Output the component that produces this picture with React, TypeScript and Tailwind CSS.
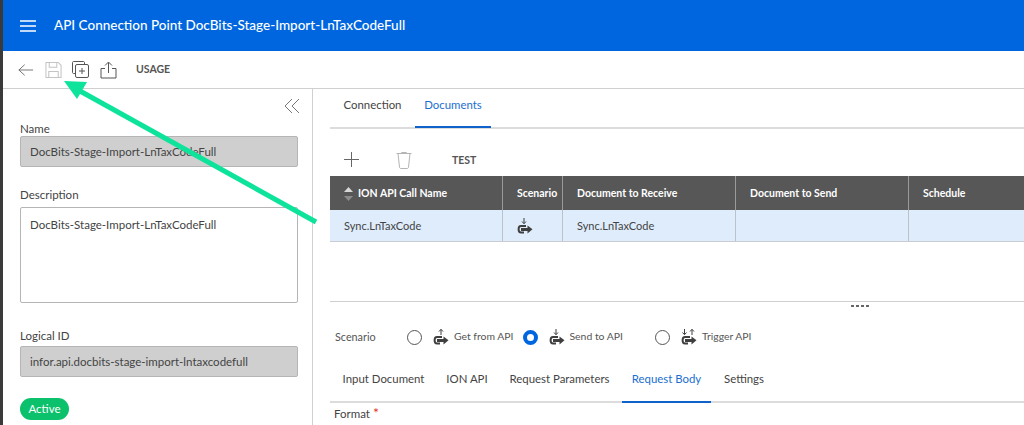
const FONT = "font-['Lato','Open_Sans',sans-serif]";

// u-turn arrow shared by the scenario icons, small arrows on top differ
const ScenarioIcon = ({ variant }: { variant: "get" | "send" | "trigger" }) => (
    <svg className="block" width="16" height="18" viewBox="0 0 16 18" fill="none" stroke="#3f3f3f">
        {variant === "get" && <path d="M8 7V1.5M6 3.5L8 1.3L10 3.5" strokeWidth="1" />}
        {variant === "send" && <path d="M7 1V6.5M5 4.5L7 6.7L9 4.5" strokeWidth="1" />}
        {variant === "trigger" && (
            <path d="M3.5 1V6.5M1.5 4.5L3.5 6.7L5.5 4.5M11 7V1.5M9 3.5L11 1.3L13 3.5" strokeWidth="1" />
        )}
        <path d="M9 9H4C.8 9 .8 15.5 4 15.5H7" strokeWidth="2" />
        <path d="M4 11H10.5V8.5L15.5 12.3L10.5 16.5V14H4Z" fill="#3f3f3f" stroke="none" />
    </svg>
);

const Radio = ({ checked }: { checked?: boolean }) =>
    checked ? (
        <span className="block w-[15px] h-[15px] rounded-full border-[4px] border-[#0066e0] bg-white" />
    ) : (
        <span className="block w-[15px] h-[15px] rounded-full border border-[#555] bg-white" />
    );

const Field = ({ label, value, className, labelClass }: { label: string; value: string; className?: string; labelClass?: string }) => (
    <div className={className}>
        <div className={`text-[11.5px] leading-[14px] text-[#444] ${labelClass}`}>{label}</div>
        <div className="h-[31px] pl-[9px] flex items-center bg-[#cfcfcf] border border-[#b5b5b5] rounded-[2px] text-[11.5px] text-[#444]">
            {value}
        </div>
    </div>
);

const Tab = ({ label, active, className }: { label: string; active?: boolean; className?: string }) => (
    <div
        className={`h-full flex items-center justify-center text-[11.4px] border-b-2 ${
            active ? "border-[#0f62c9] text-[#1a6fd0]" : "border-transparent text-[#444]"
        } ${className}`}
    >
        {label}
    </div>
);

const columns = [
    { label: "ION API Call Name", width: "w-[173px]", cell: "Sync.LnTaxCode" },
    { label: "Scenario", width: "w-[60px]", cell: "" },
    { label: "Document to Receive", width: "w-[173px]", cell: "Sync.LnTaxCode" },
    { label: "Document to Send", width: "w-[173px]", cell: "" },
    { label: "Schedule", width: "flex-1", cell: "" },
];

const App = () => {
    return (
        <div className={`relative flex w-[1024px] h-[425px] overflow-hidden bg-white ${FONT}`}>
            <div className="w-[3px] bg-[#3a3a3a] shrink-0" />

            <div className="flex-1 flex flex-col min-w-0">
                {/* Title bar */}
                <div className="h-[51px] shrink-0 bg-[#0066e0] flex items-center text-white">
                    <svg className="ml-[17px]" width="16" height="12" viewBox="0 0 16 12" stroke="#fff" strokeWidth="1.3">
                        <path d="M0 1H16M0 6H16M0 11H16" />
                    </svg>
                    <div className="ml-[18px] mb-[1px] text-[13.5px] font-medium whitespace-nowrap">
                        API Connection Point DocBits-Stage-Import-LnTaxCodeFull
                    </div>
                </div>

                {/* Toolbar */}
                <div className="h-[38px] shrink-0 border-b border-[#d0d0d0] flex items-center text-[#555]">
                    <svg className="ml-[15px]" width="16" height="14" viewBox="0 0 18 14" fill="none" stroke="#666" strokeWidth="1">
                        <path d="M17 7H1M7.5 1L1 7L7.5 13" />
                    </svg>
                    <svg className="ml-[11px]" width="17" height="18" viewBox="0 0 18 18" fill="none" stroke="#c4c4c4" strokeWidth="1.1">
                        <path d="M1 1H14L17 4V17H1ZM4.5 1V6H12.5V1M4 17V10.5H14V17" />
                    </svg>
                    <svg className="ml-[10px]" width="17" height="17" viewBox="0 0 17 17" fill="none" stroke="#555" strokeWidth="1">
                        <path d="M3 12.5H1.5C1 12.5 .5 12 .5 11.5V1.5C.5 1 1 .5 1.5 .5H11.5C12 .5 12.5 1 12.5 1.5V3" />
                        <rect x="3.5" y="3.5" width="13" height="13" rx="1.5" />
                        <path d="M10 7V13M7 10H13" />
                    </svg>
                    <svg className="ml-[11px]" width="17" height="18" viewBox="0 0 17 18" fill="none" stroke="#555" strokeWidth="1">
                        <path d="M8.5 12V1.5M5 4.5L8.5 1L12 4.5M5 7.5H1V17H16V7.5H12" />
                    </svg>
                    <div className="ml-[19px] mt-[1px] text-[10.5px] font-bold text-[#555]">USAGE</div>
                </div>

                <div className="flex-1 flex min-h-0">
                    {/* Left panel */}
                    <div className="w-[310px] shrink-0 border-r border-[#d0d0d0] pl-[17px] pr-[14px]">
                        <div className="h-[33px] flex items-center justify-end">
                            <svg className="mr-[-2px] mt-[1px]" width="16" height="16" viewBox="0 0 16 16" fill="none" stroke="#777" strokeWidth="1">
                                <path d="M8 1L1 8L8 15M15 1L8 8L15 15" />
                            </svg>
                        </div>
                        <Field label="Name" value="DocBits-Stage-Import-LnTaxCodeFull" />
                        <div className="mt-[21px] text-[11.5px] leading-[14px] text-[#444]">Description</div>
                        <div className="mt-[5px] h-[96px] border border-[#b5b5b5] rounded-[2px] pl-[9px] pt-[9px] text-[11.5px] leading-[16px] text-[#444]">
                            DocBits-Stage-Import-LnTaxCodeFull
                        </div>
                        <Field className="mt-[26px]" labelClass="mb-[3px]" label="Logical ID" value="infor.api.docbits-stage-import-lntaxcodefull" />
                        <div className="mt-[21px] w-[49px] h-[22px] rounded-full bg-[#0bc16c] text-white text-[11.5px] flex items-center justify-center">
                            Active
                        </div>
                    </div>

                    {/* Right panel */}
                    <div className="flex-1 min-w-0 pl-[17px]">
                        <div className="h-[40px] border-b-2 border-[#dcdcdc] flex items-end">
                            <div className="h-[38px] flex mb-[-1px]">
                                <Tab label="Connection" className="w-[85px] pb-[6px]" />
                                <Tab label="Documents" active className="w-[76px] pb-[6px]" />
                            </div>
                        </div>

                        {/* Table actions */}
                        <div className="h-[47px] flex items-center pt-[16px]">
                            <svg className="ml-[14px] mb-[2px]" width="15" height="15" viewBox="0 0 15 15" stroke="#666" strokeWidth="1">
                                <path d="M7.5 0V15M0 7.5H15" />
                            </svg>
                            <svg className="ml-[37px]" width="16" height="17" viewBox="0 0 16 17" fill="none" stroke="#b5b5b5" strokeWidth="1">
                                <path d="M.5 1.5H15.5M2 1.5L3.5 15C3.6 16 4 16.5 5 16.5H11C12 16.5 12.4 16 12.5 15L14 1.5M5 1.5C5 .8 5.5 .5 6 .5H10C10.5 .5 11 .8 11 1.5" />
                            </svg>
                            <div className="ml-[40px] mt-[1px] text-[10.5px] font-bold text-[#555]">TEST</div>
                        </div>

                        {/* Connection table */}
                        <div className="flex h-[34px] bg-[#575757] text-white text-[10.5px] font-bold">
                            {columns.map((col, i) => (
                                <div
                                    key={col.label}
                                    className={`${col.width} shrink-0 flex items-center whitespace-nowrap pl-[14px] pt-[1px] ${
                                        i < 4 ? "border-r border-[#9a9a9a]" : ""
                                    }`}
                                >
                                    {i === 0 && (
                                        <svg className="mr-[5px]" width="9" height="14" viewBox="0 0 9 14">
                                            <path d="M4.5 0L9 5H0Z" fill="#d8d8d8" />
                                            <path d="M4.5 14L9 9H0Z" fill="#8c8c8c" />
                                        </svg>
                                    )}
                                    {col.label}
                                </div>
                            ))}
                        </div>
                        <div className="flex h-[32px] bg-[#deecfb] border-b border-[#c9ccd0] text-[11px] text-[#444]">
                            {columns.map((col, i) => (
                                <div
                                    key={col.label}
                                    className={`${col.width} shrink-0 flex items-center pl-[14px] pt-[1px] ${
                                        i < 4 ? "border-r border-[#bcc2c9]" : ""
                                    }`}
                                >
                                    {i === 1 ? <ScenarioIcon variant="send" /> : col.cell}
                                </div>
                            ))}
                        </div>

                        {/* Splitter */}
                        <div className="relative mt-[59px] border-t border-[#cfcfcf]">
                            <div className="absolute left-[521px] top-[3px] flex gap-[2px]">
                                <span className="w-[3px] h-[2px] bg-[#666]" />
                                <span className="w-[3px] h-[2px] bg-[#666]" />
                                <span className="w-[3px] h-[2px] bg-[#666]" />
                                <span className="w-[3px] h-[2px] bg-[#666]" />
                            </div>
                        </div>

                        {/* Scenario selector */}
                        <div className="h-[20px] mt-[25px] flex items-center text-[10.4px] text-[#555] whitespace-nowrap">
                            <div className="w-[77px] pl-[5px] text-[10.8px]">Scenario</div>
                            <Radio />
                            <span className="ml-[11px]"><ScenarioIcon variant="get" /></span>
                            <span className="ml-[5px]">Get from API</span>
                            <span className="ml-[9px]"><Radio checked /></span>
                            <span className="ml-[11px]"><ScenarioIcon variant="send" /></span>
                            <span className="ml-[5px]">Send to API</span>
                            <span className="ml-[32px]"><Radio /></span>
                            <span className="ml-[11px]"><ScenarioIcon variant="trigger" /></span>
                            <span className="ml-[5px]">Trigger API</span>
                        </div>

                        {/* Detail tabs */}
                        <div className="h-[45px] mt-[11px] border-b-2 border-[#dcdcdc]">
                            <div className="h-[45px] flex">
                                <Tab label="Input Document" className="w-[107px] pb-[1px]" />
                                <Tab label="ION API" className="w-[60px] pb-[1px]" />
                                <Tab label="Request Parameters" className="w-[125px] pb-[1px]" />
                                <Tab label="Request Body" active className="w-[89px] pb-[1px]" />
                                <Tab label="Settings" className="w-[66px] pb-[1px]" />
                            </div>
                        </div>
                        <div className="mt-[3px] pl-[4px] text-[11.5px] leading-[16px] text-[#444]">
                            Format <span className="text-[14px] leading-[10px] text-[#e0342c]">*</span>
                        </div>
                    </div>
                </div>
            </div>

            {/* Annotation arrow */}
            <svg className="absolute left-0 top-0 pointer-events-none" width="1024" height="425" viewBox="0 0 1024 425" fill="none">
                <path d="M316 222L80 91" stroke="#0de39b" strokeWidth="5" />
                <path d="M64 81L87 82L77 99Z" fill="#0de39b" />
            </svg>
        </div>
    );
};

export default App;
